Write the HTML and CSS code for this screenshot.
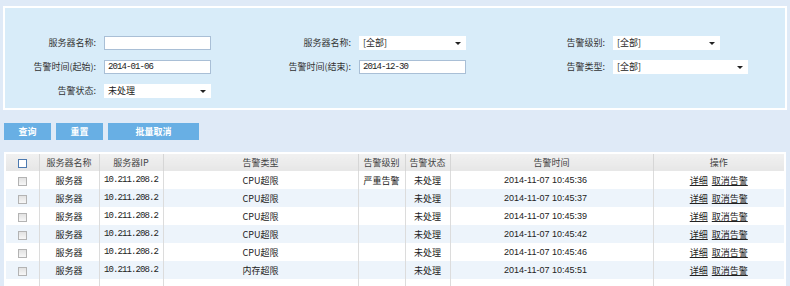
FILE: index.html
```html
<!DOCTYPE html>
<html lang="zh-CN">
<head>
    <meta charset="UTF-8">
    <title>告警管理</title>
    <link rel="stylesheet" href="styles.css">
</head>
<body>
    <!-- Filter panel -->
    <div class="filter-panel">
        <div class="filter-grid">
            <label class="lbl">服务器名称:</label>
            <input type="text" class="txt">
            <label class="lbl">服务器名称:</label>
            <div class="sel"><span>[全部]</span><i class="arrow"></i></div>
            <label class="lbl">告警级别:</label>
            <div class="sel"><span>[全部]</span><i class="arrow"></i></div>

            <label class="lbl">告警时间(起始):</label>
            <input type="text" class="txt mono" value="2014-01-06">
            <label class="lbl">告警时间(结束):</label>
            <input type="text" class="txt mono" value="2014-12-30">
            <label class="lbl">告警类型:</label>
            <div class="sel wide"><span>[全部]</span><i class="arrow"></i></div>

            <label class="lbl">告警状态:</label>
            <div class="sel"><span>未处理</span><i class="arrow"></i></div>
        </div>
    </div>

    <!-- Buttons -->
    <div class="btn-row">
        <button class="btn">查询</button>
        <button class="btn">重置</button>
        <button class="btn btn-wide">批量取消</button>
    </div>

    <!-- Results -->
    <div class="table-wrap">
        <table class="grid">
            <colgroup>
                <col style="width:33px">
                <col style="width:60px">
                <col style="width:64px">
                <col style="width:195px">
                <col style="width:47px">
                <col style="width:45px">
                <col style="width:203px">
                <col>
            </colgroup>
            <thead>
                <tr>
                    <th><span class="chk chk-head"></span></th>
                    <th>服务器名称</th>
                    <th>服务器IP</th>
                    <th>告警类型</th>
                    <th>告警级别</th>
                    <th>告警状态</th>
                    <th>告警时间</th>
                    <th>操作</th>
                </tr>
            </thead>
            <tbody>
                <tr>
                    <td><span class="chk"></span></td>
                    <td>服务器</td>
                    <td class="mono">10.211.208.2</td>
                    <td>CPU超限</td>
                    <td>严重告警</td>
                    <td>未处理</td>
                    <td class="time">2014-11-07 10:45:36</td>
                    <td><a href="#">详细</a> <a href="#">取消告警</a></td>
                </tr>
                <tr>
                    <td><span class="chk"></span></td>
                    <td>服务器</td>
                    <td class="mono">10.211.208.2</td>
                    <td>CPU超限</td>
                    <td></td>
                    <td>未处理</td>
                    <td class="time">2014-11-07 10:45:37</td>
                    <td><a href="#">详细</a> <a href="#">取消告警</a></td>
                </tr>
                <tr>
                    <td><span class="chk"></span></td>
                    <td>服务器</td>
                    <td class="mono">10.211.208.2</td>
                    <td>CPU超限</td>
                    <td></td>
                    <td>未处理</td>
                    <td class="time">2014-11-07 10:45:39</td>
                    <td><a href="#">详细</a> <a href="#">取消告警</a></td>
                </tr>
                <tr>
                    <td><span class="chk"></span></td>
                    <td>服务器</td>
                    <td class="mono">10.211.208.2</td>
                    <td>CPU超限</td>
                    <td></td>
                    <td>未处理</td>
                    <td class="time">2014-11-07 10:45:42</td>
                    <td><a href="#">详细</a> <a href="#">取消告警</a></td>
                </tr>
                <tr>
                    <td><span class="chk"></span></td>
                    <td>服务器</td>
                    <td class="mono">10.211.208.2</td>
                    <td>CPU超限</td>
                    <td></td>
                    <td>未处理</td>
                    <td class="time">2014-11-07 10:45:46</td>
                    <td><a href="#">详细</a> <a href="#">取消告警</a></td>
                </tr>
                <tr>
                    <td><span class="chk"></span></td>
                    <td>服务器</td>
                    <td class="mono">10.211.208.2</td>
                    <td>内存超限</td>
                    <td></td>
                    <td>未处理</td>
                    <td class="time">2014-11-07 10:45:51</td>
                    <td><a href="#">详细</a> <a href="#">取消告警</a></td>
                </tr>
                <tr>
                    <td></td><td></td><td></td><td></td><td></td><td></td><td></td><td></td>
                </tr>
            </tbody>
        </table>
    </div>
</body>
</html>
```

FILE: styles.css
```css
body {
    margin: 0;
    padding: 6px 3px 0 3px;
    background-color: #dfeaf7;
    font-family: "Noto Sans CJK SC", "Liberation Sans", sans-serif;
    font-size: 9px;
    color: #333;
    overflow: hidden;
}

/* Filter panel */
.filter-panel {
    border: 2px solid #fff;
    background-color: #d8ecf9;
    padding: 28px 0 10px 0;
    height: 62px;
}

.filter-grid {
    display: grid;
    grid-template-columns: 99px 107px 148px 107px 147px auto;
    grid-auto-rows: 14px;
    row-gap: 10px;
    align-items: center;
}

.lbl {
    text-align: right;
    padding-right: 8px;
    line-height: 14px;
    white-space: nowrap;
}

.txt {
    box-sizing: border-box;
    width: 107px;
    height: 14px;
    margin: 0;
    padding: 0 3px;
    border: 1px solid #a9bfd6;
    background: #fff;
    font-family: "Noto Sans CJK SC", sans-serif;
    font-size: 9px;
    color: #222;
    outline: none;
}

.txt.mono {
    font-family: "Liberation Mono", monospace;
    letter-spacing: -0.9px;
}

.sel {
    box-sizing: border-box;
    width: 107px;
    height: 14px;
    background: #fff;
    display: flex;
    align-items: center;
    justify-content: space-between;
    padding: 0 5px 0 4px;
    color: #222;
    line-height: 14px;
}

.sel.wide {
    width: 135px;
}

.arrow {
    width: 0;
    height: 0;
    border-left: 3px solid transparent;
    border-right: 3px solid transparent;
    border-top: 3px solid #222;
}

/* Buttons */
.btn-row {
    display: flex;
    gap: 5px;
    margin: 13px 0 0 1px;
}

.btn {
    width: 47px;
    height: 17px;
    border: none;
    padding: 0;
    background-color: #68afe4;
    color: #fff;
    font-family: "Noto Sans CJK SC", sans-serif;
    font-size: 9px;
    font-weight: bold;
}

.btn-wide {
    width: 91px;
}

/* Result table */
.table-wrap {
    margin: 12px 1px 0 1px;
    border: 2px solid #fff;
    border-bottom: none;
    background: #fff;
}

.grid {
    width: 100%;
    border-collapse: collapse;
    table-layout: fixed;
}

.grid th {
    height: 17px;
    background: linear-gradient(#f1f1f1, #e6e6e6);
    font-weight: normal;
    color: #444;
    border-left: 1px solid #d6d6d6;
    padding: 0;
}

.grid td {
    height: 18px;
    padding: 0;
    text-align: center;
    border-left: 1px solid #dcdcdc;
    color: #222;
    white-space: nowrap;
}

.grid th:first-child,
.grid td:first-child {
    border-left: none;
}

.grid tbody tr:nth-child(even) td {
    background-color: #edf4fb;
}

.grid td.mono {
    font-family: "Liberation Mono", monospace;
    font-size: 9px;
    letter-spacing: -0.9px;
}

.grid td.time {
    font-family: "Liberation Sans", sans-serif;
    font-size: 9px;
    padding-right: 12px;
}

.grid a {
    color: #222;
    text-decoration: underline;
    margin: 0 1px;
}

.chk {
    display: inline-block;
    width: 7px;
    height: 7px;
    border: 1px solid #b3b3b3;
    background: linear-gradient(#e2e2e2, #f7f7f7);
    vertical-align: middle;
}

.chk-head {
    border-color: #4d7ab0;
    background: #fff;
}
```
